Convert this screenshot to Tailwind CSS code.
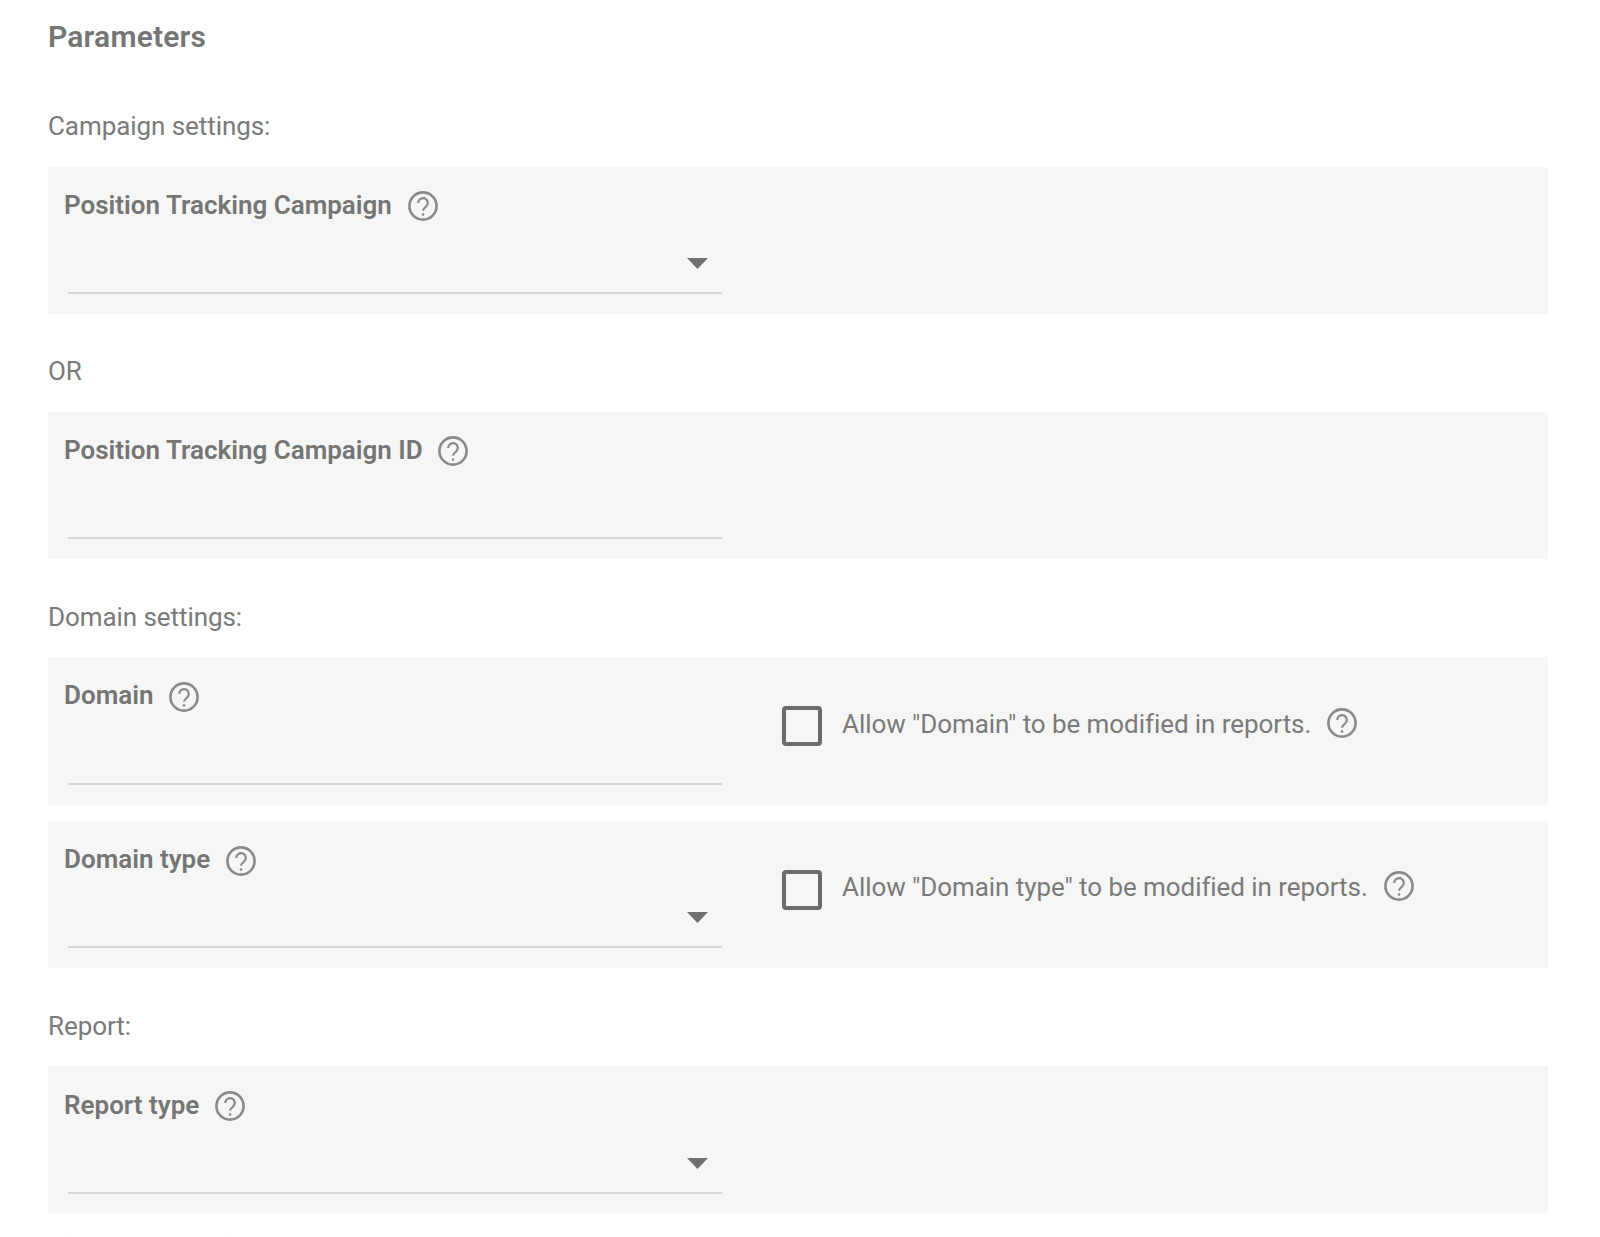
<!DOCTYPE html>
<html lang="en">

<head>
    <meta charset="UTF-8" />
    <title>Parameters</title>
    <script src="https://cdn.jsdelivr.net/npm/@tailwindcss/browser@4"></script>
</head>

<body class="bg-white h-[1237px] overflow-hidden font-['Roboto',sans-serif] text-[#757575]">
    <div class="pl-12 pr-[52px]">
        <h1 class="h-[72px] pt-[17px] text-[30px] leading-[40px] font-semibold tracking-[0.2px]">Parameters</h1>
        <p class="h-[95px] pt-[38px] text-[26px] leading-[32px] text-[#7a7a7a] tracking-[-0.07px]">Campaign settings:</p>

        <!-- campaign -->
        <div class="h-[147px] bg-[#f6f6f6] pt-[22px] pl-4">
            <div class="flex items-center h-8">
                <span class="text-[26px] font-semibold">Position Tracking Campaign</span>
                <svg class="ml-4 w-[30px] h-[30px] mt-0.5" viewBox="0 0 30 30" fill="none" stroke="#8a8a8a" stroke-width="2.6"><circle cx="15" cy="15" r="13.6"/><path d="M10.2 12a4.8 4.8 0 1 1 7.6 3.8c-1.7 1.2-2.8 2.1-2.8 4" stroke-width="2.2"/><circle cx="15" cy="23.6" r="1.3" fill="#8a8a8a" stroke="none"/></svg>
            </div>
            <div class="relative w-[654px] ml-1 mt-[41px] border-b-2 border-[#d6d6d6] h-[32px]">
                <svg class="absolute right-[14px] -top-[4px] w-[21px] h-[11px]" viewBox="0 0 21 11"><path d="M0 0h21L10.5 11z" fill="#707070"/></svg>
            </div>
        </div>

        <p class="h-[98px] pt-[41px] text-[26px] leading-[32px] text-[#7a7a7a] tracking-[-0.07px]">OR</p>

        <div class="h-[147px] bg-[#f6f6f6] pt-[22px] pl-4">
            <div class="flex items-center h-8">
                <span class="text-[26px] font-semibold">Position Tracking Campaign ID</span>
                <svg class="ml-[15px] w-[30px] h-[30px] mt-0.5" viewBox="0 0 30 30" fill="none" stroke="#8a8a8a" stroke-width="2.6"><circle cx="15" cy="15" r="13.6"/><path d="M10.2 12a4.8 4.8 0 1 1 7.6 3.8c-1.7 1.2-2.8 2.1-2.8 4" stroke-width="2.2"/><circle cx="15" cy="23.6" r="1.3" fill="#8a8a8a" stroke="none"/></svg>
            </div>
            <div class="w-[654px] ml-1 mt-[41px] border-b-2 border-[#d6d6d6] h-[32px]"></div>
        </div>

        <p class="h-[98px] pt-[42px] text-[26px] leading-[32px] text-[#7a7a7a] tracking-[-0.07px]">Domain settings:</p>

        <!-- domain -->
        <div class="h-[148px] bg-[#f6f6f6] pt-[22px] pl-4 flex">
            <div class="w-[658px]">
                <div class="flex items-center h-8">
                    <span class="text-[26px] font-semibold">Domain</span>
                    <svg class="ml-4 w-[30px] h-[30px] mt-[4px]" viewBox="0 0 30 30" fill="none" stroke="#8a8a8a" stroke-width="2.6"><circle cx="15" cy="15" r="13.6"/><path d="M10.2 12a4.8 4.8 0 1 1 7.6 3.8c-1.7 1.2-2.8 2.1-2.8 4" stroke-width="2.2"/><circle cx="15" cy="23.6" r="1.3" fill="#8a8a8a" stroke="none"/></svg>
                </div>
                <div class="w-[654px] ml-1 mt-[42px] border-b-2 border-[#d6d6d6] h-[32px]"></div>
            </div>
            <div class="flex items-start ml-[60px] pt-[27px]">
                <div class="w-10 h-10 border-[4px] border-[#6b6b6b] rounded-[4px]"></div>
                <span class="ml-5 text-[26px] leading-[32px] text-[#7a7a7a] tracking-[-0.07px] mt-[2px]">Allow "Domain" to be modified in reports.</span>
                <svg class="ml-4 w-[30px] h-[30px] mt-[2px]" viewBox="0 0 30 30" fill="none" stroke="#8a8a8a" stroke-width="2.6"><circle cx="15" cy="15" r="13.6"/><path d="M10.2 12a4.8 4.8 0 1 1 7.6 3.8c-1.7 1.2-2.8 2.1-2.8 4" stroke-width="2.2"/><circle cx="15" cy="23.6" r="1.3" fill="#8a8a8a" stroke="none"/></svg>
            </div>
        </div>

        <div class="h-[147px] mt-4 bg-[#f6f6f6] pt-[22px] pl-4 flex">
            <div class="w-[658px]">
                <div class="flex items-center h-8">
                    <span class="text-[26px] font-semibold">Domain type</span>
                    <svg class="ml-4 w-[30px] h-[30px] mt-[3px]" viewBox="0 0 30 30" fill="none" stroke="#8a8a8a" stroke-width="2.6"><circle cx="15" cy="15" r="13.6"/><path d="M10.2 12a4.8 4.8 0 1 1 7.6 3.8c-1.7 1.2-2.8 2.1-2.8 4" stroke-width="2.2"/><circle cx="15" cy="23.6" r="1.3" fill="#8a8a8a" stroke="none"/></svg>
                </div>
                <div class="relative w-[654px] ml-1 mt-[41px] border-b-2 border-[#d6d6d6] h-[32px]">
                    <svg class="absolute right-[14px] -top-[4px] w-[21px] h-[11px]" viewBox="0 0 21 11"><path d="M0 0h21L10.5 11z" fill="#707070"/></svg>
                </div>
            </div>
            <div class="flex items-start ml-[60px] pt-[27px]">
                <div class="w-10 h-10 border-[4px] border-[#6b6b6b] rounded-[4px]"></div>
                <span class="ml-5 text-[26px] leading-[32px] text-[#7a7a7a] tracking-[-0.07px] mt-[1px]">Allow "Domain type" to be modified in reports.</span>
                <svg class="ml-4 w-[30px] h-[30px] mt-[1px]" viewBox="0 0 30 30" fill="none" stroke="#8a8a8a" stroke-width="2.6"><circle cx="15" cy="15" r="13.6"/><path d="M10.2 12a4.8 4.8 0 1 1 7.6 3.8c-1.7 1.2-2.8 2.1-2.8 4" stroke-width="2.2"/><circle cx="15" cy="23.6" r="1.3" fill="#8a8a8a" stroke="none"/></svg>
            </div>
        </div>

        <p class="h-[98px] pt-[42px] text-[26px] leading-[32px] text-[#7a7a7a] tracking-[-0.07px]">Report:</p>

        <!-- report -->
        <div class="h-[147px] bg-[#f6f6f6] pt-[23px] pl-4">
            <div class="flex items-center h-8">
                <span class="text-[26px] font-semibold">Report type</span>
                <svg class="ml-4 w-[30px] h-[30px] mt-0.5" viewBox="0 0 30 30" fill="none" stroke="#8a8a8a" stroke-width="2.6"><circle cx="15" cy="15" r="13.6"/><path d="M10.2 12a4.8 4.8 0 1 1 7.6 3.8c-1.7 1.2-2.8 2.1-2.8 4" stroke-width="2.2"/><circle cx="15" cy="23.6" r="1.3" fill="#8a8a8a" stroke="none"/></svg>
            </div>
            <div class="relative w-[654px] ml-1 mt-[41px] border-b-2 border-[#d6d6d6] h-[32px]">
                <svg class="absolute right-[14px] -top-[4px] w-[21px] h-[11px]" viewBox="0 0 21 11"><path d="M0 0h21L10.5 11z" fill="#707070"/></svg>
            </div>
        </div>

        <!-- next button, cut off by the bottom edge -->
        <div class="mt-[23px] ml-4 w-[168px] h-10 rounded-sm bg-white shadow-sm"></div>
    </div>
</body>

</html>
